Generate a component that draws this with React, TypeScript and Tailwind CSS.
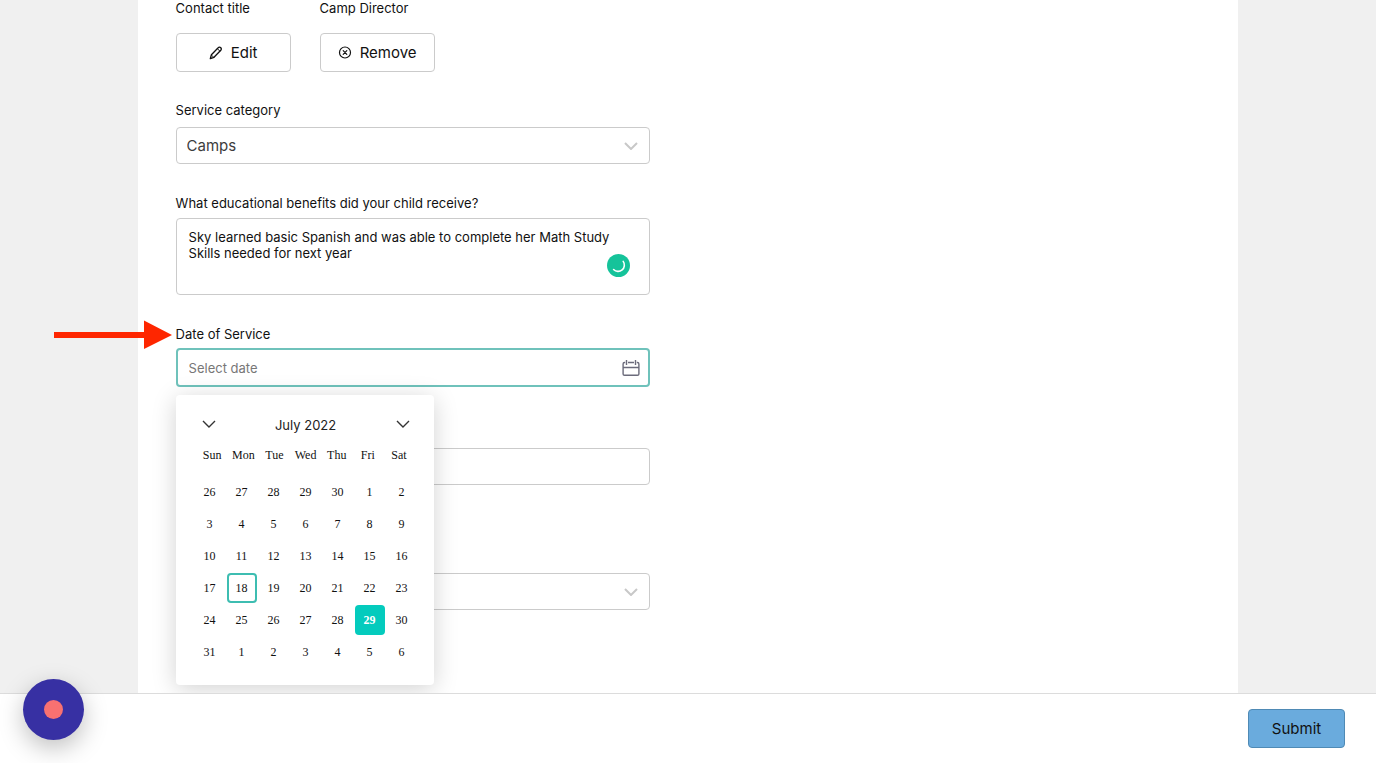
import { useState } from "react";
import clsx from "clsx";

const WEEKDAYS = ["Sun", "Mon", "Tue", "Wed", "Thu", "Fri", "Sat"];

// 42 days starting from the last Sunday of June
const DAYS = Array.from({ length: 42 }, (_, i) => new Date(2022, 5, 26 + i));
const WEEKS = Array.from({ length: 6 }, (_, i) => DAYS.slice(i * 7, i * 7 + 7));

const TODAY = new Date(2022, 6, 29).getTime();
const FOCUSED = new Date(2022, 6, 18).getTime();

const FIELD = "block w-full rounded border border-[#cbcbcb] bg-white";

function Chevron({ className }: { className?: string }) {
  return (
    <svg viewBox="0 0 14 8" fill="none" stroke="currentColor" className={className} aria-hidden="true">
      <path d="M1 1l6 6 6-6" />
    </svg>
  );
}

function PencilIcon() {
  return (
    <svg width="14" height="14" viewBox="0 0 14 14" fill="none" stroke="currentColor" strokeWidth="1.3" strokeLinejoin="round" aria-hidden="true">
      <path d="M1.3 12.7l1.1-3.9L8.700 2.200c1-1 2.300-1.200 3.100-.5.7.8.5 2.100-.5 3.100l-6.300 6.500-3.700 1.400z" />
      <path d="M8.500 2.800l2.500 2.500M2.500 9.100l2.300 2.300" strokeWidth="1" />
    </svg>
  );
}

function RemoveIcon() {
  return (
    <svg width="14" height="14" viewBox="0 0 14 14" fill="none" stroke="currentColor" strokeWidth="1.2" strokeLinecap="round" aria-hidden="true">
      <circle cx="7" cy="6.500" r="5.500" />
      <path d="M5.200 4.700l3.600 3.600M8.800 4.700L5.200 8.300" />
    </svg>
  );
}

function CalendarIcon() {
  return (
    <svg width="18" height="18" viewBox="0 0 18 18" fill="none" stroke="currentColor" strokeWidth="1.4" aria-hidden="true">
      <path d="M3.200 3.500h-.7c-.9 0-1.400.5-1.400 1.400v10c0 .9.5 1.400 1.400 1.400h13c.9 0 1.400-.5 1.400-1.400v-10c0-.9-.5-1.400-1.400-1.400h-.7M6 3.500h6M1 8.500h16" />
      <path d="M4.500 1v5M13.500 1v5" />
    </svg>
  );
}

function SelectField({ id, label, options }: { id: string; label?: string; options: string[] }) {
  return (
    <div className="relative">
      <select id={id} aria-label={label} className={clsx(FIELD, "h-[37px] appearance-none px-[10px] text-[15px] text-[#3c3c3c]")}>
        {options.map((o) => (
          <option key={o}>{o}</option>
        ))}
      </select>
      <Chevron className="pointer-events-none absolute top-[15px] right-3 h-2 w-[14px] stroke-2 text-[#c8c8c8]" />
    </div>
  );
}

function DatePicker({ onPick }: { onPick: (d: Date) => void }) {
  return (
    <div className="absolute top-full left-0 z-10 mt-2 h-[290px] w-[258px] rounded bg-white pr-4 pl-[18px] pt-[19px] shadow-[0_4px_24px_rgba(0,0,0,0.18)]">
      <div className="flex h-5 items-center justify-between px-2">
        <button aria-label="Previous month">
          <Chevron className="h-2 w-[14px] stroke-[1.4] text-[#333]" />
        </button>
        <span className="pt-px text-[13px] text-[#222]">July 2022</span>
        <button aria-label="Next month">
          <Chevron className="h-2 w-[14px] stroke-[1.4] text-[#333]" />
        </button>
      </div>
      <table className="mt-[13px] block font-['Liberation_Serif',serif] text-[12px] text-[#111]">
        <thead className="block">
          <tr className="flex px-[3px]">
            {WEEKDAYS.map((d) => (
              <th key={d} className="flex-1 text-center leading-4 font-normal">{d}</th>
            ))}
          </tr>
        </thead>
        <tbody className="mt-[13px] block">
          {WEEKS.map((week, i) => (
            <tr key={i} className="flex">
              {week.map((d) => (
                <td key={d.getTime()} className="flex-1 p-px">
                  <button
                    onClick={() => onPick(d)}
                    className={clsx(
                      "h-[30px] w-full rounded",
                      d.getTime() === FOCUSED && "border-2 border-[#3dbdb1]",
                      d.getTime() === TODAY && "bg-[#04cbbd] font-bold text-white"
                    )}
                  >
                    {d.getDate()}
                  </button>
                </td>
              ))}
            </tr>
          ))}
        </tbody>
      </table>
    </div>
  );
}

export default function App() {
  const [date, setDate] = useState("");
  const [benefits, setBenefits] = useState(
    "Sky learned basic Spanish and was able to complete her Math Study Skills needed for next year"
  );

  return (
    <div className="flex min-h-screen flex-col bg-[#f0f0f0] font-['Inter',sans-serif] text-[13px] leading-4 text-[#111]">
      <main className="mx-auto w-4/5 flex-1 bg-white pl-[38px]">
        <form id="service-form" className="w-full max-w-[474px] pb-[83px]">
          <div className="grid w-[259px] grid-cols-2 gap-x-[29px] gap-y-[17px]">
            <span>Contact title</span>
            <span className="whitespace-nowrap">Camp Director</span>
            <button type="button" className="flex h-[39px] items-center justify-center gap-2 rounded border border-[#cbcbcb] text-[15px]">
              <PencilIcon />
              Edit
            </button>
            <button type="button" className="flex h-[39px] items-center justify-center gap-2 rounded border border-[#cbcbcb] text-[15px]">
              <RemoveIcon />
              Remove
            </button>
          </div>

          <label htmlFor="category" className="mt-[30px] mb-[9px] block">Service category</label>
          <SelectField id="category" options={["Camps"]} />

          <label htmlFor="benefits" className="mt-[31px] mb-[7px] block">
            What educational benefits did your child receive?
          </label>
          <div className="relative">
            <textarea
              id="benefits"
              value={benefits}
              onChange={(e) => setBenefits(e.target.value)}
              spellCheck={false}
              className={clsx(FIELD, "h-[77px] resize-none px-3 py-[10px]")}
            />
            <span className="absolute right-5 bottom-[18px] size-[23px] rounded-full bg-[#15c39a]">
              <svg viewBox="0 0 23 23" fill="none" stroke="white" strokeWidth="1.6" strokeLinecap="round" aria-hidden="true">
                <path d="M16.2 7.4A6.3 6.3 0 0 1 6.6 15.5" />
              </svg>
            </span>
          </div>

          <div className="relative mt-[31px]">
            <label htmlFor="date" className="mb-[6px] block">Date of Service</label>
            <svg width="118" height="30" viewBox="0 0 118 30" fill="#fe2600" className="absolute -top-[6px] -left-[122px]" aria-hidden="true">
              <path d="M0 12h90V.5L118 15 90 29V18H0z" />
            </svg>
            <div className="relative">
              <input
                id="date"
                value={date}
                onChange={(e) => setDate(e.target.value)}
                placeholder="Select date"
                className="block h-[39px] w-full rounded border-2 border-[#6fc2bb] bg-white px-[11px] outline-none placeholder:text-[#777]"
              />
              <span className="pointer-events-none absolute top-[11px] right-[10px] text-[#6b6b7b]">
                <CalendarIcon />
              </span>
            </div>
            <DatePicker onPick={(d) => setDate(d.toLocaleDateString())} />
          </div>

          <input aria-label="Amount" className={clsx(FIELD, "mt-[61px] h-[37px] px-3")} />
          <div className="mt-[88px]">
            <SelectField id="student" label="Student" options={[""]} />
          </div>
        </form>
      </main>

      <footer className="relative z-20 flex h-[70px] items-center justify-end border-t border-[#dcdcdc] bg-white px-[31px]">
        <button type="submit" form="service-form" className="h-[39px] w-[97px] rounded border border-[#4f8ab5] bg-[#6aabdd] text-[15px]">
          Submit
        </button>
      </footer>

      <button
        aria-label="Record"
        className="fixed bottom-[23px] left-[23px] z-30 flex size-[61px] items-center justify-center rounded-full bg-[#3730a3] shadow-[0_8px_24px_rgba(0,0,0,0.25)]"
      >
        <span className="size-[19px] rounded-full bg-[#f87171]" />
      </button>
    </div>
  );
}
